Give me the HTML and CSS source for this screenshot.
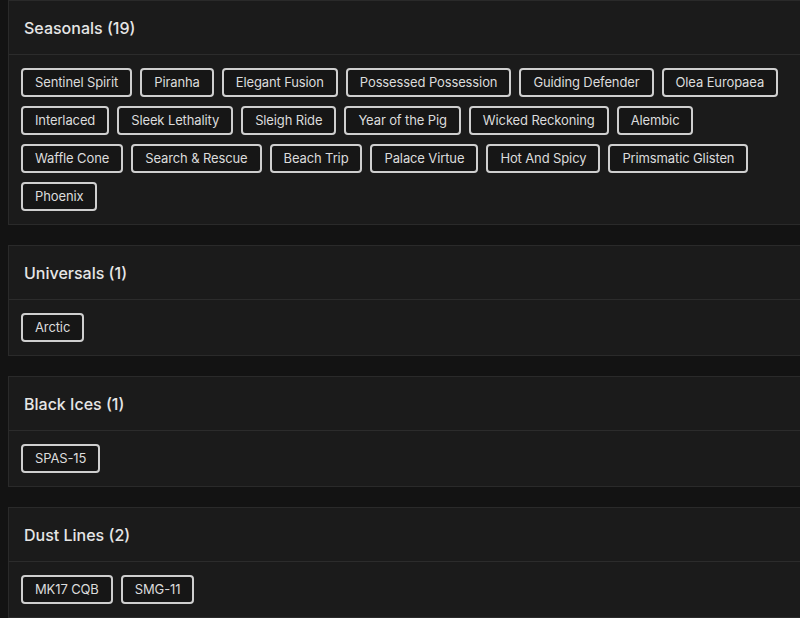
FILE: index.html
```html
<!DOCTYPE html>
<html lang="en">
<head>
<meta charset="utf-8">
<title>Skins</title>
<link rel="stylesheet" href="styles.css">
</head>
<body>
<div class="page">
  <section class="card">
    <h2 class="card-head">Seasonals (19)</h2>
    <div class="card-body">
      <span class="chip">Sentinel Spirit</span>
      <span class="chip">Piranha</span>
      <span class="chip">Elegant Fusion</span>
      <span class="chip">Possessed Possession</span>
      <span class="chip">Guiding Defender</span>
      <span class="chip">Olea Europaea</span>
      <span class="chip">Interlaced</span>
      <span class="chip">Sleek Lethality</span>
      <span class="chip">Sleigh Ride</span>
      <span class="chip">Year of the Pig</span>
      <span class="chip">Wicked Reckoning</span>
      <span class="chip">Alembic</span>
      <span class="chip">Waffle Cone</span>
      <span class="chip">Search &amp; Rescue</span>
      <span class="chip">Beach Trip</span>
      <span class="chip">Palace Virtue</span>
      <span class="chip">Hot And Spicy</span>
      <span class="chip">Primsmatic Glisten</span>
      <span class="chip">Phoenix</span>
    </div>
  </section>
  <section class="card">
    <h2 class="card-head">Universals (1)</h2>
    <div class="card-body">
      <span class="chip">Arctic</span>
    </div>
  </section>
  <section class="card">
    <h2 class="card-head">Black Ices (1)</h2>
    <div class="card-body">
      <span class="chip">SPAS-15</span>
    </div>
  </section>
  <section class="card">
    <h2 class="card-head">Dust Lines (2)</h2>
    <div class="card-body">
      <span class="chip">MK17 CQB</span>
      <span class="chip">SMG-11</span>
    </div>
  </section>
</div>
</body>
</html>
```
FILE: styles.css
```css
html, body {
  margin: 0;
  padding: 0;
  background: #131313;
  overflow: hidden;
}
body {
  font-family: "Inter", "Open Sans", sans-serif;
  color: #e2e2e2;
}
.page {
  display: flex;
  flex-direction: column;
  gap: 20px;
  margin: 0 -6px 0 8px;
}
.card {
  background: #1b1b1b;
  border: 1px solid #2a2a2a;
}
.card-head {
  margin: 0;
  height: 53px;
  display: flex;
  align-items: center;
  padding: 0 15px;
  font-size: 16px;
  font-weight: 500;
  color: #e6e6e6;
  border-bottom: 1px solid #2c2c2c;
}
.card-body {
  display: flex;
  flex-wrap: wrap;
  column-gap: 8px;
  row-gap: 9px;
  padding: 13px 12px 13px;
}
.chip {
  display: inline-block;
  padding: 5px 12px;
  line-height: 15px;
  font-size: 13px;
  letter-spacing: -0.12px;
  color: #dcdcdc;
  background: #161616;
  border: 2px solid #cfcfcf;
  border-radius: 4px;
  white-space: nowrap;
}
```
